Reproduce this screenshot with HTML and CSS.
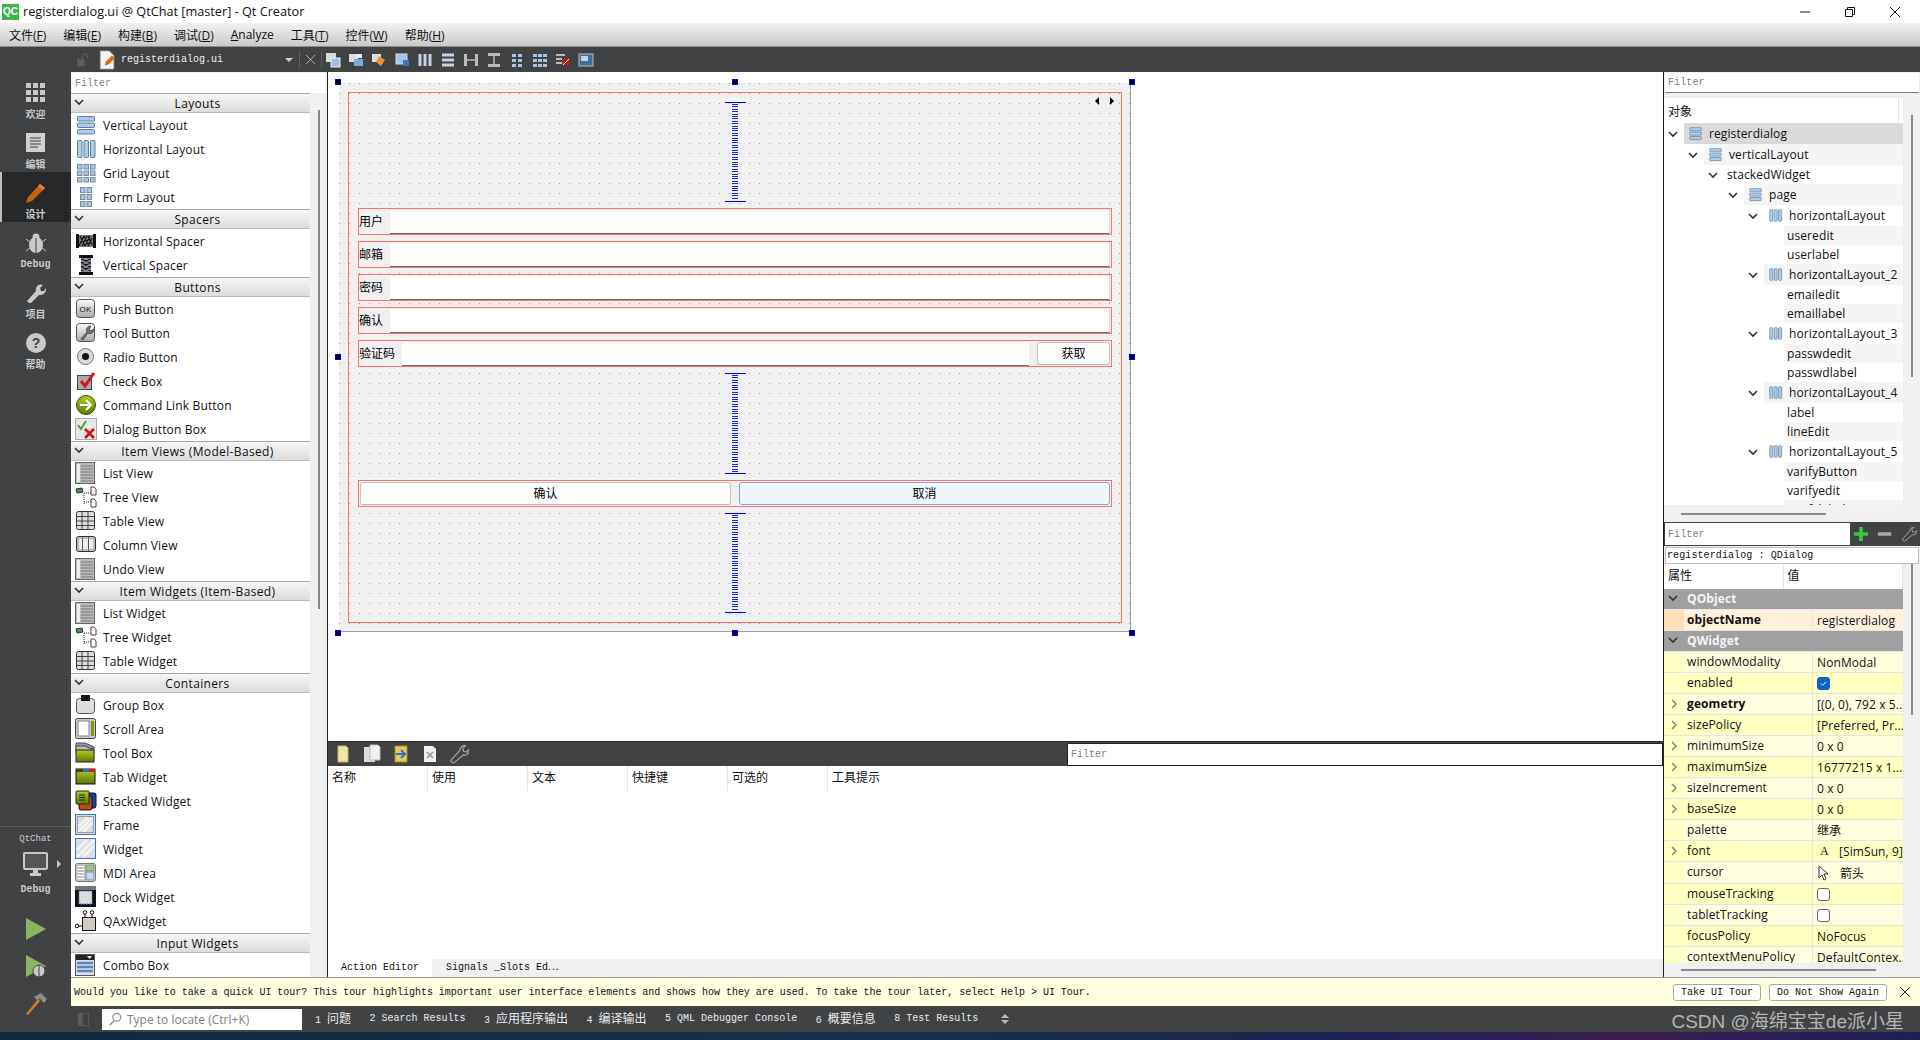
FILE: index.html
```html
<!DOCTYPE html>
<html>

<head>
	<meta charset="utf-8">
	<title>registerdialog.ui @ QtChat [master] - Qt Creator</title>
	<link rel="stylesheet" href="styles.css">
</head>

<body>
	<svg class="defs" xmlns="http://www.w3.org/2000/svg">
		<defs>
			<linearGradient id="g-btn" x1="0" y1="0" x2="0" y2="1"><stop offset="0" stop-color="#fafafa"/><stop offset="1" stop-color="#a8a8a8"/></linearGradient>
			<linearGradient id="g-green" x1="0" y1="0" x2="0" y2="1"><stop offset="0" stop-color="#b4cc22"/><stop offset="1" stop-color="#5c7a00"/></linearGradient>
			<symbol id="i-chev" viewBox="0 0 10 10"><path d="M1 3l4 4 4-4" fill="none" stroke="currentColor" stroke-width="1.6"/></symbol>
			<symbol id="i-chevr" viewBox="0 0 10 10"><path d="M3 1l4 4-4 4" fill="none" stroke="currentColor" stroke-width="1.6"/></symbol>
			<symbol id="i-vlay" viewBox="0 0 22 22"><g fill="#a8cdf0" stroke="#6a7d90"><rect x="2.5" y="2.5" width="17" height="4.5" rx="1"/><rect x="2.5" y="9" width="17" height="4.5" rx="1"/><rect x="2.5" y="15.500" width="17" height="4.500" rx="1"/></g></symbol>
			<symbol id="i-hlay" viewBox="0 0 22 22"><g fill="#a8cdf0" stroke="#6a7d90"><rect x="2.500" y="2.500" width="4.500" height="17" rx="1"/><rect x="9" y="2.500" width="4.500" height="17" rx="1"/><rect x="15.500" y="2.500" width="4.500" height="17" rx="1"/></g></symbol>
			<symbol id="i-grid" viewBox="0 0 22 22"><g fill="#a8c4e4" stroke="#7a8ba0"><rect x="2.500" y="2.500" width="4.500" height="4.500"/><rect x="9" y="2.500" width="4.500" height="4.500"/><rect x="15.500" y="2.500" width="4.500" height="4.500"/><rect x="2.500" y="9" width="4.500" height="4.500"/><rect x="9" y="9" width="4.500" height="4.500"/><rect x="15.500" y="9" width="4.500" height="4.500"/><rect x="2.500" y="15.500" width="4.500" height="4.500"/><rect x="9" y="15.500" width="4.500" height="4.500"/><rect x="15.500" y="15.500" width="4.500" height="4.500"/></g></symbol>
			<symbol id="i-form" viewBox="0 0 22 22"><g fill="#a8c4e4" stroke="#7a8ba0"><rect x="5.500" y="1.500" width="4.500" height="5"/><rect x="12" y="1.500" width="4.500" height="5"/><rect x="5.500" y="8.500" width="4.500" height="5"/><rect x="12" y="8.500" width="4.500" height="5"/><rect x="5.500" y="15.500" width="4.500" height="5"/><rect x="12" y="15.500" width="4.500" height="5"/></g></symbol>
			<symbol id="i-hsp" viewBox="0 0 22 22"><rect x="1" y="4" width="3" height="14" fill="#111"/><rect x="18" y="4" width="3" height="14" fill="#111"/><rect x="4" y="5" width="14" height="12" fill="#777"/><path d="M4 16l5-10M7 16l5-10M10 16l5-10M13 16l4-8M5 6l5 10M9 6l5 10M13 6l4 9" stroke="#111" stroke-width="1.200" fill="none"/></symbol>
			<symbol id="i-vsp" viewBox="0 0 22 22"><rect x="4" y="1" width="14" height="3" fill="#111"/><rect x="4" y="18" width="14" height="3" fill="#111"/><rect x="6" y="4" width="10" height="14" fill="#889"/><path d="M6 5l10 4M6 9l10 4M6 13l10 4M16 5L6 9M16 9L6 13M16 13L6 17" stroke="#111" stroke-width="1.200" fill="none"/></symbol>
			<symbol id="i-push" viewBox="0 0 22 22"><rect x="1.500" y="1.500" width="18" height="18" rx="3" fill="url(#g-btn)" stroke="#555"/><text x="10.500" y="13.500" font-size="8" font-family="Liberation Sans" text-anchor="middle" fill="#111">OK</text></symbol>
			<symbol id="i-tool" viewBox="0 0 22 22"><rect x="1.500" y="1.500" width="18" height="18" rx="3" fill="url(#g-btn)" stroke="#555"/><path d="M6 17l6-7a4 4 0 0 1 4-6l-2 3 2 2 3-2a4 4 0 0 1-6 4l-5 7z" fill="#777" stroke="#333" stroke-width=".7"/></symbol>
			<symbol id="i-radio" viewBox="0 0 22 22"><circle cx="10.500" cy="10.500" r="8" fill="#d8d8d8" stroke="#777"/><circle cx="10.500" cy="10.500" r="3.500" fill="#111"/></symbol>
			<symbol id="i-check" viewBox="0 0 22 22"><rect x="2.500" y="5.500" width="14" height="14" fill="#a8a8a8" stroke="#444"/><path d="M6 11l4 5 9-13" fill="none" stroke="#d4141c" stroke-width="3"/></symbol>
			<symbol id="i-link" viewBox="0 0 22 22"><circle cx="11" cy="11" r="9.500" fill="url(#g-green)" stroke="#3c4c00"/><path d="M5 11h10M11 6l5 5-5 5" fill="none" stroke="#fff" stroke-width="2"/></symbol>
			<symbol id="i-dbb" viewBox="0 0 22 22"><rect x=".5" y=".5" width="21" height="21" fill="#e6e6e6" stroke="#aaa"/><path d="M3 7l3 4 5-8" fill="none" stroke="#4aa038" stroke-width="2"/><path d="M10 11l9 9M19 11l-9 9" stroke="#cc1414" stroke-width="2.600"/></symbol>
			<symbol id="i-list" viewBox="0 0 22 22"><rect x=".5" y=".5" width="19" height="21" fill="#bbb" stroke="#666"/><rect x="2" y="2" width="3" height="18" fill="#eee"/><path d="M6 4h12M6 7h12M6 10h12M6 13h12M6 16h12M6 19h12" stroke="#777"/></symbol>
			<symbol id="i-tree" viewBox="0 0 22 22"><path d="M1 3l6-1 1 4-6 1z" fill="#4a9a38" stroke="#234"/><path d="M9 7v11M9 7h7M9 16h7" stroke="#333" stroke-dasharray="1 1" fill="none"/><path d="M16 1h3l2 2v6h-5zM16 13h3l2 2v6h-5z" fill="#fff" stroke="#444"/></symbol>
			<symbol id="i-table" viewBox="0 0 22 22"><rect x="1.500" y="1.500" width="18" height="18" rx="2" fill="#ddd" stroke="#333"/><path d="M2 6.500h17M2 11h17M2 15.500h17M7 2v17M13 2v17" stroke="#444"/></symbol>
			<symbol id="i-col" viewBox="0 0 22 22"><rect x="1.500" y="2.500" width="19" height="15" rx="2" fill="#eee" stroke="#333"/><path d="M7.500 3v14M13.500 3v14" stroke="#555"/><rect x="3" y="4" width="16" height="12" fill="none" stroke="#888"/></symbol>
			<symbol id="i-group" viewBox="0 0 22 22"><rect x="1.500" y="4.500" width="18" height="15" rx="3" fill="#ddd" stroke="#555"/><rect x="6" y="1" width="9" height="6" fill="#111"/></symbol>
			<symbol id="i-scroll" viewBox="0 0 22 22"><rect x=".5" y=".5" width="20" height="20" rx="2" fill="#ccc" stroke="#444"/><rect x="3" y="3" width="11" height="15" fill="#fff" stroke="#888"/><rect x="16" y="3" width="3" height="15" fill="#7a9a10"/></symbol>
			<symbol id="i-tbox" viewBox="0 0 22 22"><path d="M1 1h9l9 4v2H1z" fill="#999" stroke="#444"/><path d="M1 4h9l9 4v3H1z" fill="#bbb" stroke="#444"/><rect x="1" y="8" width="18" height="12" fill="url(#g-green)" stroke="#222"/></symbol>
			<symbol id="i-tab" viewBox="0 0 22 22"><rect x="1" y="3" width="19" height="15" fill="url(#g-green)" stroke="#111"/><rect x="8" y="3" width="6" height="3" fill="#2a6ed0"/><rect x="14" y="3" width="6" height="3" fill="#d42020"/><rect x="1" y="3" width="7" height="3" fill="#3a4a00"/></symbol>
			<symbol id="i-stack" viewBox="0 0 22 22"><rect x="8" y="3" width="13" height="15" rx="2" fill="#1446a8" stroke="#111"/><rect x="4" y="6" width="13" height="14" rx="2" fill="#c04a10" stroke="#111"/><rect x="1" y="1" width="13" height="13" rx="1" fill="url(#g-green)" stroke="#222"/><path d="M4 5h6M4 7.500h6M4 10h6" stroke="#222"/></symbol>
			<symbol id="i-frame" viewBox="0 0 22 22"><rect x=".5" y=".5" width="20" height="20" fill="#ddd" stroke="#3a78c4"/><path d="M3 13L13 3M3 18L18 3M8 18L18 8" stroke="#f4f4f4" stroke-width="2.500"/><rect x="2.500" y="2.500" width="16" height="16" fill="none" stroke="#999"/></symbol>
			<symbol id="i-widget" viewBox="0 0 22 22"><rect x=".5" y=".5" width="20" height="20" fill="#ddd" stroke="#3a78c4"/><path d="M2 12L12 2M2 19L19 2M8 19L19 8" stroke="#f4f4f4" stroke-width="2.500"/></symbol>
			<symbol id="i-mdi" viewBox="0 0 22 22"><rect x=".5" y="1.500" width="20" height="18" rx="2" fill="#eee" stroke="#777"/><rect x="2" y="3" width="8" height="15" fill="#fff" stroke="#999"/><path d="M3 6h6M3 9h6M3 12h6M3 15h6" stroke="#888"/><rect x="11" y="3" width="8" height="6" fill="#9cc870" stroke="#789"/><rect x="11" y="10" width="8" height="8" fill="#c4d8ee" stroke="#789"/></symbol>
			<symbol id="i-dock" viewBox="0 0 22 22"><rect x="0" y="0" width="21" height="21" fill="#111"/><rect x="0" y="0" width="21" height="4" fill="#777"/><rect x="4" y="5" width="13" height="13" fill="#ddd" stroke="#4a88d0" stroke-dasharray="2 1"/></symbol>
			<symbol id="i-qax" viewBox="0 0 22 22"><rect x="7.500" y="7.500" width="13" height="13" fill="#d0ccc0" stroke="#111"/><path d="M10 7V3M17 7V3M0 16h7" stroke="#111"/><circle cx="10" cy="2.500" r="1.800" fill="#fff" stroke="#111"/><circle cx="17" cy="2.500" r="1.800" fill="#fff" stroke="#111"/><circle cx="2" cy="16" r="1.800" fill="#fff" stroke="#111"/></symbol>
			<symbol id="i-combo" viewBox="0 0 22 22"><rect x=".5" y=".5" width="19" height="21" fill="#dde" stroke="#555"/><rect x="1" y="1" width="18" height="5" fill="#222"/><path d="M12 2h5l-2.500 3z" fill="#fff"/><path d="M2 9h16M2 13h16M2 17h16" stroke="#5a84bc" stroke-width="2.400"/></symbol>
			<symbol id="i-doc" viewBox="0 0 18 22"><path d="M1 1h10l5 5v15H1z" fill="#f4f4f4" stroke="#999"/><path d="M6 17l1-4 7-7 3 3-7 7z" fill="#d86a14"/></symbol>
			<symbol id="i-lock" viewBox="0 0 16 16"><rect x="1" y="7" width="9" height="8" fill="#5a5c5e"/><path d="M7 7V4a3 3 0 0 1 6 0v2" fill="none" stroke="#5a5c5e" stroke-width="1.500"/></symbol>
			<symbol id="i-wrench" viewBox="0 0 22 22"><path d="M3 20l-1-2 10-11a5 5 0 0 1 6-5l-3 3 1 3 3 1 3-3a5 5 0 0 1-6 6L5 21z" fill="none" stroke="#a8a8a8" stroke-width="1.300"/></symbol>
			<symbol id="t-a" viewBox="0 0 16 16"><rect x="1" y="1" width="10" height="9" fill="#d8d8d8"/><rect x="6" y="6" width="9" height="9" fill="#9cc0e8" stroke="#eee"/></symbol>
			<symbol id="t-b" viewBox="0 0 16 16"><rect x="1" y="2" width="9" height="8" fill="#ddd"/><rect x="6" y="7" width="9" height="7" fill="#7aa8dc"/><rect x="8" y="2" width="6" height="4" fill="#eee"/></symbol>
			<symbol id="t-c" viewBox="0 0 16 16"><rect x="1" y="2" width="9" height="8" fill="#ddd"/><path d="M8 4l6 4-4 6-5-4z" fill="#f09030"/></symbol>
			<symbol id="t-d" viewBox="0 0 16 16"><rect x="2" y="2" width="11" height="10" fill="#a0c4ec" stroke="#ddd"/><rect x="9" y="8" width="6" height="6" fill="#3a78c4"/></symbol>
			<symbol id="t-h" viewBox="0 0 16 16"><path d="M3 2v12M8 2v12M13 2v12" stroke="#c4d4e6" stroke-width="3"/></symbol>
			<symbol id="t-v" viewBox="0 0 16 16"><path d="M2 3h12M2 8h12M2 13h12" stroke="#c4d4e6" stroke-width="3"/></symbol>
			<symbol id="t-s" viewBox="0 0 16 16"><rect x="1" y="2" width="3" height="12" fill="#bbb"/><rect x="12" y="2" width="3" height="12" fill="#bbb"/><path d="M4 8h8" stroke="#999" stroke-width="2"/></symbol>
			<symbol id="t-w" viewBox="0 0 16 16"><rect x="2" y="1" width="12" height="3" fill="#bbb"/><rect x="2" y="12" width="12" height="3" fill="#bbb"/><path d="M8 4v8" stroke="#999" stroke-width="2"/></symbol>
			<symbol id="t-f" viewBox="0 0 16 16"><g fill="#a8c4e4"><rect x="3" y="2" width="4" height="3"/><rect x="9" y="2" width="4" height="3"/><rect x="3" y="7" width="4" height="3"/><rect x="9" y="7" width="4" height="3"/><rect x="3" y="12" width="4" height="3"/><rect x="9" y="12" width="4" height="3"/></g></symbol>
			<symbol id="t-g" viewBox="0 0 16 16"><g fill="#a8c4e4"><rect x="1" y="2" width="4" height="3"/><rect x="6" y="2" width="4" height="3"/><rect x="11" y="2" width="4" height="3"/><rect x="1" y="7" width="4" height="3"/><rect x="6" y="7" width="4" height="3"/><rect x="11" y="7" width="4" height="3"/><rect x="1" y="12" width="4" height="3"/><rect x="6" y="12" width="4" height="3"/><rect x="11" y="12" width="4" height="3"/></g></symbol>
			<symbol id="t-x" viewBox="0 0 16 16"><path d="M1 3h9M1 7h6M1 11h9" stroke="#bbb" stroke-width="2"/><circle cx="11" cy="10" r="4" fill="#b02020"/><path d="M8 13l6-6" stroke="#eee"/></symbol>
			<symbol id="t-z" viewBox="0 0 16 16"><rect x="1" y="2" width="14" height="12" fill="#3f6f9c" stroke="#bbb"/><rect x="3" y="4" width="7" height="5" fill="#c4d4e6"/></symbol>
		</defs>
	</svg>

	<div class="titlebar">
		<span class="qc-logo">QC</span>
		<span class="title-text">registerdialog.ui @ QtChat [master] - Qt Creator</span>
		<div class="win-btns">
			<svg class="win-btn" viewBox="0 0 12 12"><path d="M1 6h10" stroke="#111"/></svg>
			<svg class="win-btn" viewBox="0 0 12 12"><path d="M1.500 3.500h7v7h-7zM3.500 3V1.500h7v7H9" fill="none" stroke="#111"/></svg>
			<svg class="win-btn" viewBox="0 0 12 12"><path d="M1 1l10 10M11 1L1 11" stroke="#111"/></svg>
		</div>
	</div>

	<div class="menubar">
		<span>文件(<u>F</u>)</span>
		<span>编辑(<u>E</u>)</span>
		<span>构建(<u>B</u>)</span>
		<span>调试(<u>D</u>)</span>
		<span><u>A</u>nalyze</span>
		<span>工具(<u>T</u>)</span>
		<span>控件(<u>W</u>)</span>
		<span>帮助(<u>H</u>)</span>
	</div>

	<div class="shell">
		<div class="modebar">
			<div class="mode">
				<svg class="mode-ico" viewBox="0 0 20 20"><g fill="#c9c9c9"><rect x="0" y="0" width="5" height="5"/><rect x="7" y="0" width="5" height="5"/><rect x="14" y="0" width="5" height="5"/><rect x="0" y="7" width="5" height="5"/><rect x="7" y="7" width="5" height="5"/><rect x="14" y="7" width="5" height="5"/><rect x="0" y="14" width="5" height="5"/><rect x="7" y="14" width="5" height="5"/><rect x="14" y="14" width="5" height="5"/></g></svg>
				<span>欢迎</span>
			</div>
			<div class="mode">
				<svg class="mode-ico" viewBox="0 0 20 20"><rect width="19" height="19" fill="#d0d0d0"/><path d="M4 5h11M4 8h11M4 11h11M4 14h8" stroke="#404244"/></svg>
				<span>编辑</span>
			</div>
			<div class="mode mode-on">
				<svg class="mode-ico" viewBox="0 0 20 20"><path d="M0 20l2-6L14 1l5 4L6 18z" fill="#c8620c"/><path d="M14 1l5 4-2 2-5-4z" fill="#e08a30"/></svg>
				<span>设计</span>
			</div>
			<div class="mode">
				<svg class="mode-ico" viewBox="0 0 20 20"><ellipse cx="10" cy="12" rx="7" ry="8" fill="#c9c9c9"/><circle cx="10" cy="4" r="3.500" fill="#c9c9c9"/><path d="M10 5v15" stroke="#404244"/><path d="M0 6l4 3M20 6l-4 3M0 18l4-3M20 18l-4-3" stroke="#c9c9c9"/></svg>
				<span class="mode-latin">Debug</span>
			</div>
			<div class="mode">
				<svg class="mode-ico" viewBox="0 0 20 20"><path d="M1 18l9-10a5 5 0 0 1 7-6l-3 3 1 3 3 0 2-3a6 6 0 0 1-7 7l-9 9z" fill="#c9c9c9"/></svg>
				<span>项目</span>
			</div>
			<div class="mode">
				<svg class="mode-ico" viewBox="0 0 20 20"><circle cx="10" cy="10" r="10" fill="#c9c9c9"/><text x="10" y="15" font-size="14" font-weight="700" font-family="Liberation Sans" text-anchor="middle" fill="#404244">?</text></svg>
				<span>帮助</span>
			</div>
			<div class="mode-gap"></div>
			<div class="kit">
				<span class="kit-name">QtChat</span>
				<div class="kit-screen">
					<svg class="kit-ico" viewBox="0 0 26 26"><rect x="1" y="1" width="23" height="16" rx="1" fill="#555" stroke="#c9c9c9" stroke-width="2"/><path d="M10 18h5v3h3v3H7v-3h3z" fill="#c9c9c9"/></svg>
					<span class="kit-arrow"></span>
				</div>
				<span class="mode-latin">Debug</span>
			</div>
			<svg class="run-ico" viewBox="0 0 24 24"><path d="M2 1l20 11L2 23z" fill="#8cb65e"/></svg>
			<svg class="run-ico" viewBox="0 0 24 24"><path d="M2 1l20 11L2 23z" fill="#8cb65e"/><ellipse cx="15" cy="17" rx="6" ry="6" fill="#c9c9c9" stroke="#404244"/><path d="M15 11v12" stroke="#404244"/></svg>
			<svg class="run-ico run-last" viewBox="0 0 24 24"><path d="M2 23L14 8l2 2L4 24z" fill="#d87a20"/><path d="M10 6l7-4 6 6-3 4-4-4-3 1z" fill="#8a8a8a"/></svg>
		</div>

		<div class="workspace">
			<div class="toolbar">
				<svg class="tb-lock"><use href="#i-lock"/></svg>
				<svg class="tb-doc"><use href="#i-doc"/></svg>
				<span class="tb-file">registerdialog.ui</span>
				<span class="tb-drop"></span>
				<span class="tb-sep"></span>
				<svg class="tb-close" viewBox="0 0 10 10"><path d="M0 0l10 10M10 0L0 10" stroke="#b8b8b8"/></svg>
				<span class="tb-sep"></span>
				<div class="tb-icons">
					<svg><use href="#t-a"/></svg><svg><use href="#t-b"/></svg><svg><use href="#t-c"/></svg><svg><use href="#t-d"/></svg>
					<svg><use href="#t-h"/></svg><svg><use href="#t-v"/></svg><svg><use href="#t-s"/></svg><svg><use href="#t-w"/></svg>
					<svg><use href="#t-f"/></svg><svg><use href="#t-g"/></svg><svg><use href="#t-x"/></svg><svg><use href="#t-z"/></svg>
				</div>
			</div>

			<div class="main">
				<div class="widgetbox">
					<div class="filter wb-filter">Filter</div>
					<div class="wb-body">
						<div class="wb-list">
							<div class="wb-head"><svg class="chev"><use href="#i-chev"/></svg>Layouts</div>
							<div class="wb-item"><svg><use href="#i-vlay"/></svg>Vertical Layout</div>
							<div class="wb-item"><svg><use href="#i-hlay"/></svg>Horizontal Layout</div>
							<div class="wb-item"><svg><use href="#i-grid"/></svg>Grid Layout</div>
							<div class="wb-item"><svg><use href="#i-form"/></svg>Form Layout</div>
							<div class="wb-head"><svg class="chev"><use href="#i-chev"/></svg>Spacers</div>
							<div class="wb-item"><svg><use href="#i-hsp"/></svg>Horizontal Spacer</div>
							<div class="wb-item"><svg><use href="#i-vsp"/></svg>Vertical Spacer</div>
							<div class="wb-head"><svg class="chev"><use href="#i-chev"/></svg>Buttons</div>
							<div class="wb-item"><svg><use href="#i-push"/></svg>Push Button</div>
							<div class="wb-item"><svg><use href="#i-tool"/></svg>Tool Button</div>
							<div class="wb-item"><svg><use href="#i-radio"/></svg>Radio Button</div>
							<div class="wb-item"><svg><use href="#i-check"/></svg>Check Box</div>
							<div class="wb-item"><svg><use href="#i-link"/></svg>Command Link Button</div>
							<div class="wb-item"><svg><use href="#i-dbb"/></svg>Dialog Button Box</div>
							<div class="wb-head"><svg class="chev"><use href="#i-chev"/></svg>Item Views (Model-Based)</div>
							<div class="wb-item"><svg><use href="#i-list"/></svg>List View</div>
							<div class="wb-item"><svg><use href="#i-tree"/></svg>Tree View</div>
							<div class="wb-item"><svg><use href="#i-table"/></svg>Table View</div>
							<div class="wb-item"><svg><use href="#i-col"/></svg>Column View</div>
							<div class="wb-item"><svg><use href="#i-list"/></svg>Undo View</div>
							<div class="wb-head"><svg class="chev"><use href="#i-chev"/></svg>Item Widgets (Item-Based)</div>
							<div class="wb-item"><svg><use href="#i-list"/></svg>List Widget</div>
							<div class="wb-item"><svg><use href="#i-tree"/></svg>Tree Widget</div>
							<div class="wb-item"><svg><use href="#i-table"/></svg>Table Widget</div>
							<div class="wb-head"><svg class="chev"><use href="#i-chev"/></svg>Containers</div>
							<div class="wb-item"><svg><use href="#i-group"/></svg>Group Box</div>
							<div class="wb-item"><svg><use href="#i-scroll"/></svg>Scroll Area</div>
							<div class="wb-item"><svg><use href="#i-tbox"/></svg>Tool Box</div>
							<div class="wb-item"><svg><use href="#i-tab"/></svg>Tab Widget</div>
							<div class="wb-item"><svg><use href="#i-stack"/></svg>Stacked Widget</div>
							<div class="wb-item"><svg><use href="#i-frame"/></svg>Frame</div>
							<div class="wb-item"><svg><use href="#i-widget"/></svg>Widget</div>
							<div class="wb-item"><svg><use href="#i-mdi"/></svg>MDI Area</div>
							<div class="wb-item"><svg><use href="#i-dock"/></svg>Dock Widget</div>
							<div class="wb-item"><svg><use href="#i-qax"/></svg>QAxWidget</div>
							<div class="wb-head"><svg class="chev"><use href="#i-chev"/></svg>Input Widgets</div>
							<div class="wb-item"><svg><use href="#i-combo"/></svg>Combo Box</div>
						</div>
						<div class="vscroll"><div class="wb-thumb"></div></div>
					</div>
				</div>

				<div class="designer">
					<div class="canvas">
						<div class="form">
							<span class="handle h-tl"></span><span class="handle h-tc"></span><span class="handle h-tr"></span>
							<span class="handle h-ml"></span><span class="handle h-mr"></span>
							<span class="handle h-bl"></span><span class="handle h-bc"></span><span class="handle h-br"></span>
							<div class="layout-outer">
								<span class="page-prev"></span><span class="page-next"></span>
								<div class="spacer"></div>
								<div class="row"><div class="lbl">用户</div><div class="edit"></div></div>
								<div class="row"><div class="lbl">邮箱</div><div class="edit"></div></div>
								<div class="row"><div class="lbl">密码</div><div class="edit"></div></div>
								<div class="row"><div class="lbl">确认</div><div class="edit"></div></div>
								<div class="row"><div class="lbl lbl-wide">验证码</div><div class="edit edit-short"></div><div class="btn btn-get">获取</div></div>
								<div class="spacer spacer-mid"></div>
								<div class="row row-btns"><div class="btn">确认</div><div class="btn btn-focus">取消</div></div>
								<div class="spacer"></div>
							</div>
						</div>
					</div>

					<div class="actionbar">
						<svg viewBox="0 0 16 20"><path d="M3 2h8l2 2v14H3z" fill="#f2e4a8" stroke="#c8b060"/></svg>
						<svg viewBox="0 0 20 20"><path d="M2 3h9l2 2v13H2z" fill="#dcdcdc"/><path d="M8 1h8l2 2v13H8z" fill="#f2f2f2" stroke="#bbb"/></svg>
						<svg viewBox="0 0 18 20"><path d="M3 2h12v16H3z" fill="#e8c860" stroke="#a88820"/><path d="M4 10h8M9 6l4 4-4 4" stroke="#2a70c8" stroke-width="2" fill="none"/></svg>
						<svg viewBox="0 0 16 20"><path d="M2 2h9l3 3v13H2z" fill="#f0f0f0"/><path d="M5 8l6 6M11 8l-6 6" stroke="#999" stroke-width="1.600"/></svg>
						<svg viewBox="0 0 22 22"><use href="#i-wrench"/></svg>
						<div class="action-filter filter">Filter</div>
					</div>
					<div class="action-table">
						<div class="action-head">
							<span>名称</span><span>使用</span><span>文本</span><span>快捷键</span><span>可选的</span><span>工具提示</span>
						</div>
					</div>
					<div class="dock-tabs">
						<span class="dock-tab dock-on">Action Editor</span>
						<span class="dock-tab">Signals _Slots Ed⋯</span>
					</div>
				</div>

				<div class="rightpanel">
					<div class="filter rp-filter">Filter</div>
					<div class="tree-wrap">
						<div class="tree">
							<div class="tree-head">对象</div>
							<div class="node d0 big sel"><span class="twist"><svg><use href="#i-chev"/></svg></span><span class="cell"><svg class="node-ico"><use href="#i-vlay"/></svg>registerdialog</span></div>
							<div class="node d1 big alt"><span class="twist"><svg><use href="#i-chev"/></svg></span><span class="cell"><svg class="node-ico"><use href="#i-vlay"/></svg>verticalLayout</span></div>
							<div class="node d2 leaf"><span class="twist"><svg><use href="#i-chev"/></svg></span><span class="cell">stackedWidget</span></div>
							<div class="node d3 big alt"><span class="twist"><svg><use href="#i-chev"/></svg></span><span class="cell"><svg class="node-ico"><use href="#i-vlay"/></svg>page</span></div>
							<div class="node d4 big"><span class="twist"><svg><use href="#i-chev"/></svg></span><span class="cell"><svg class="node-ico"><use href="#i-hlay"/></svg>horizontalLayout</span></div>
							<div class="node d5 leaf alt"><span class="twist"></span><span class="cell">useredit</span></div>
							<div class="node d5 leaf"><span class="twist"></span><span class="cell">userlabel</span></div>
							<div class="node d4 big alt"><span class="twist"><svg><use href="#i-chev"/></svg></span><span class="cell"><svg class="node-ico"><use href="#i-hlay"/></svg>horizontalLayout_2</span></div>
							<div class="node d5 leaf"><span class="twist"></span><span class="cell">emailedit</span></div>
							<div class="node d5 leaf alt"><span class="twist"></span><span class="cell">emaillabel</span></div>
							<div class="node d4 big"><span class="twist"><svg><use href="#i-chev"/></svg></span><span class="cell"><svg class="node-ico"><use href="#i-hlay"/></svg>horizontalLayout_3</span></div>
							<div class="node d5 leaf alt"><span class="twist"></span><span class="cell">passwdedit</span></div>
							<div class="node d5 leaf"><span class="twist"></span><span class="cell">passwdlabel</span></div>
							<div class="node d4 big alt"><span class="twist"><svg><use href="#i-chev"/></svg></span><span class="cell"><svg class="node-ico"><use href="#i-hlay"/></svg>horizontalLayout_4</span></div>
							<div class="node d5 leaf"><span class="twist"></span><span class="cell">label</span></div>
							<div class="node d5 leaf alt"><span class="twist"></span><span class="cell">lineEdit</span></div>
							<div class="node d4 big"><span class="twist"><svg><use href="#i-chev"/></svg></span><span class="cell"><svg class="node-ico"><use href="#i-hlay"/></svg>horizontalLayout_5</span></div>
							<div class="node d5 leaf alt"><span class="twist"></span><span class="cell">varifyButton</span></div>
							<div class="node d5 leaf"><span class="twist"></span><span class="cell">varifyedit</span></div>
							<div class="node d5 leaf alt"><span class="twist"></span><span class="cell">varifylabel</span></div>
						</div>
						<div class="vscroll"><div class="tree-thumb"></div></div>
					</div>
					<div class="hscroll"><div class="tree-hthumb"></div></div>

					<div class="prop-bar">
						<div class="filter prop-filter">Filter</div>
						<svg viewBox="0 0 18 18"><path d="M7 1h4v6h6v4h-6v6H7v-6H1V7h6z" fill="#3cc83c"/></svg>
						<svg viewBox="0 0 18 18"><rect x="1" y="7" width="15" height="4" fill="#a8a8a8"/></svg>
						<svg viewBox="0 0 22 22"><use href="#i-wrench"/></svg>
					</div>
					<div class="obj-class">registerdialog : QDialog</div>
					<div class="prop-wrap">
						<div class="props">
							<div class="prop-head"><span>属性</span><span>值</span></div>
							<div class="prop-group"><svg class="chev"><use href="#i-chev"/></svg>QObject</div>
							<div class="prop obj"><span class="gut"></span><span class="pname bold">objectName</span><span class="pval">registerdialog</span></div>
							<div class="prop-group"><svg class="chev"><use href="#i-chev"/></svg>QWidget</div>
							<div class="prop lite"><span class="gut"></span><span class="pname">windowModality</span><span class="pval">NonModal</span></div>
							<div class="prop"><span class="gut"></span><span class="pname">enabled</span><span class="pval"><span class="cb cb-on"><svg viewBox="0 0 12 12"><path d="M3 6l2 2 4-4" fill="none" stroke="#fff"/></svg></span></span></div>
							<div class="prop lite"><span class="gut"><svg><use href="#i-chevr"/></svg></span><span class="pname bold">geometry</span><span class="pval">[(0, 0), 792 x 5..</span></div>
							<div class="prop"><span class="gut"><svg><use href="#i-chevr"/></svg></span><span class="pname">sizePolicy</span><span class="pval">[Preferred, Pr...</span></div>
							<div class="prop lite"><span class="gut"><svg><use href="#i-chevr"/></svg></span><span class="pname">minimumSize</span><span class="pval">0 x 0</span></div>
							<div class="prop"><span class="gut"><svg><use href="#i-chevr"/></svg></span><span class="pname">maximumSize</span><span class="pval">16777215 x 1...</span></div>
							<div class="prop lite"><span class="gut"><svg><use href="#i-chevr"/></svg></span><span class="pname">sizeIncrement</span><span class="pval">0 x 0</span></div>
							<div class="prop"><span class="gut"><svg><use href="#i-chevr"/></svg></span><span class="pname">baseSize</span><span class="pval">0 x 0</span></div>
							<div class="prop lite"><span class="gut"></span><span class="pname">palette</span><span class="pval">继承</span></div>
							<div class="prop"><span class="gut"><svg><use href="#i-chevr"/></svg></span><span class="pname">font</span><span class="pval"><span class="font-a">A</span>[SimSun, 9]</span></div>
							<div class="prop lite prop-tall"><span class="gut"></span><span class="pname">cursor</span><span class="pval"><svg class="cursor-ico" viewBox="0 0 12 16"><path d="M1 1v12l3-3 2 5 2-1-2-5h4z" fill="#fff" stroke="#333"/></svg>箭头</span></div>
							<div class="prop"><span class="gut"></span><span class="pname">mouseTracking</span><span class="pval"><span class="cb"></span></span></div>
							<div class="prop lite"><span class="gut"></span><span class="pname">tabletTracking</span><span class="pval"><span class="cb"></span></span></div>
							<div class="prop"><span class="gut"></span><span class="pname">focusPolicy</span><span class="pval">NoFocus</span></div>
							<div class="prop lite"><span class="gut"></span><span class="pname">contextMenuPolicy</span><span class="pval">DefaultContex..</span></div>
						</div>
						<div class="vscroll"><div class="prop-thumb"></div></div>
					</div>
					<div class="hscroll hscroll-low"><div class="prop-hthumb"></div></div>
				</div>
			</div>

			<div class="tour">
				<span class="tour-text">Would you like to take a quick UI tour? This tour highlights important user interface elements and shows how they are used. To take the tour later, select Help &gt; UI Tour.</span>
				<span class="tour-btn">Take UI Tour</span>
				<span class="tour-btn">Do Not Show Again</span>
				<svg class="tour-x" viewBox="0 0 10 10"><path d="M0 0l10 10M10 0L0 10" stroke="#222"/></svg>
			</div>

			<div class="status">
				<svg class="st-toggle" viewBox="0 0 12 14"><rect x="0" y="0" width="12" height="14" fill="#5a5c5e"/><rect x="5" y="1" width="6" height="12" fill="#404244"/></svg>
				<div class="locator">
					<svg viewBox="0 0 16 16"><circle cx="10" cy="6" r="4.500" fill="none" stroke="#888" stroke-width="1.300"/><path d="M7 10l-5 5" stroke="#888" stroke-width="1.600"/></svg>
					Type to locate (Ctrl+K)
				</div>
				<div class="st-tabs">
					<span>1 <span class="cn">问题</span></span>
					<span>2 Search Results</span>
					<span>3 <span class="cn">应用程序输出</span></span>
					<span>4 <span class="cn">编译输出</span></span>
					<span>5 QML Debugger Console</span>
					<span>6 <span class="cn">概要信息</span></span>
					<span>8 Test Results</span>
				</div>
				<span class="st-updown"></span>
				<span class="watermark">CSDN @海绵宝宝de派小星</span>
			</div>
		</div>
	</div>

	<div class="desktop"></div>
</body>

</html>
```

FILE: styles.css
```css
* {
	box-sizing: border-box;
}

body {
	margin: 0;
	height: 100vh;
	display: flex;
	flex-direction: column;
	overflow: hidden;
	background-color: #fff;
	color: #111;
	font-family: "Open Sans", "Noto Sans CJK SC", sans-serif;
	font-size: 12px;
}

.defs {
	position: absolute;
	width: 0;
	height: 0;
}

.titlebar {
	height: 23px;
	display: flex;
	align-items: center;
	background-color: #fff;
}

.qc-logo {
	width: 17px;
	height: 16px;
	margin-left: 2px;
	background-color: #3cb54a;
	color: #fff;
	font: 700 10px/16px "Liberation Sans", sans-serif;
	text-align: center;
}

.title-text {
	margin-left: 4px;
	padding-bottom: 2px;
	font-size: 12.700px;
	white-space: nowrap;
}

.win-btns {
	margin-left: auto;
	display: flex;
	gap: 33px;
	padding-right: 19px;
}

.win-btn {
	width: 12px;
	height: 12px;
}

.menubar {
	height: 24px;
	display: flex;
	align-items: center;
	gap: 17px;
	padding-left: 9px;
	background: linear-gradient(#f2f2f2, #c9c9c9);
	border-bottom: 1px solid #8c8c8c;
	white-space: nowrap;
}

.shell {
	flex: 1;
	display: flex;
	min-height: 0;
}

.desktop {
	height: 8px;
	flex: none;
	background: linear-gradient(90deg, #10283f, #15304a 45%, #1c2350 70%, #3a1c52 85%, #1c2050);
}

/* left mode bar */
.modebar {
	width: 71px;
	flex: none;
	display: flex;
	flex-direction: column;
	padding-top: 25px;
	background-color: #404244;
	color: #c9c9c9;
}

.mode {
	height: 50px;
	display: flex;
	flex-direction: column;
	align-items: center;
	padding-top: 11px;
	font-size: 10px;
	font-weight: 700;
	line-height: 13px;
}

.mode-on {
	background-color: #262829;
	border-left: 2px solid #bdbdbd;
	padding-right: 2px;
}

.mode-ico {
	width: 20px;
	height: 20px;
	margin-bottom: 5px;
	flex: none;
}

.mode-latin {
	font-family: "Liberation Mono", monospace;
	font-size: 10px;
	font-weight: 700;
}

.mode-gap {
	flex: 1;
}

.kit {
	height: 78px;
	flex: none;
	display: flex;
	flex-direction: column;
	align-items: center;
	padding-top: 6px;
	border-top: 1px solid #5c5e60;
	margin-bottom: 13px;
	font-size: 10px;
}

.kit-name {
	font: 9px/12px "Liberation Mono", monospace;
}

.kit-screen {
	position: relative;
	height: 39px;
	padding-top: 7px;
}

.kit-ico {
	width: 26px;
	height: 26px;
}

.kit-arrow {
	position: absolute;
	left: 34px;
	top: 15px;
	border-left: 4px solid #c9c9c9;
	border-top: 4px solid transparent;
	border-bottom: 4px solid transparent;
}

.run-ico {
	width: 24px;
	height: 24px;
	margin: 0 auto 13px;
	flex: none;
}

.run-last {
	margin-bottom: 17px;
}

.workspace {
	flex: 1;
	min-width: 0;
	display: flex;
	flex-direction: column;
}

/* top toolbar */
.toolbar {
	height: 25px;
	flex: none;
	display: flex;
	align-items: center;
	padding-left: 5px;
	background-color: #404244;
	color: #eee;
}

.tb-lock {
	width: 14px;
	height: 14px;
}

.tb-doc {
	width: 17px;
	height: 20px;
	margin-left: 9px;
}

.tb-file {
	margin-left: 5px;
	width: 164px;
	font: 10px "Liberation Mono", monospace;
}

.tb-drop {
	border-top: 4px solid #d0d0d0;
	border-left: 4px solid transparent;
	border-right: 4px solid transparent;
}

.tb-sep {
	width: 1px;
	height: 17px;
	margin-left: 6px;
	background-color: #5c5e60;
}

.tb-close {
	width: 9px;
	height: 9px;
	margin-left: 6px;
}

.tb-icons {
	display: flex;
	gap: 7px;
	margin-left: 3px;
}

.tb-icons svg {
	width: 16px;
	height: 16px;
}

.main {
	flex: 1;
	min-height: 0;
	display: flex;
}

.filter {
	display: flex;
	align-items: center;
	padding-left: 3px;
	background-color: #fff;
	color: #808080;
	font: 10px "Liberation Mono", monospace;
}

/* widget box */
.widgetbox {
	width: 256px;
	flex: none;
	display: flex;
	flex-direction: column;
	background-color: #f0f0f0;
}

.wb-filter {
	height: 20px;
	margin: 1px 1px 0;
	flex: none;
}

.wb-body {
	flex: 1;
	min-height: 0;
	display: flex;
}

.wb-list {
	width: 239px;
	background-color: #fff;
	overflow: hidden;
}

.wb-head {
	position: relative;
	height: 20px;
	padding-left: 14px;
	border-top: 1px solid #a6a6a6;
	border-bottom: 1px solid #bdbdbd;
	background: linear-gradient(#f6f6f6, #dcdcdc);
	text-align: center;
	letter-spacing: .35px;
	line-height: 19px;
}

.chev {
	width: 10px;
	height: 10px;
	color: #333;
}

.wb-head .chev {
	position: absolute;
	left: 3px;
	top: 3px;
}

.wb-item {
	height: 24px;
	display: flex;
	align-items: center;
	padding-left: 4px;
	letter-spacing: .15px;
}

.wb-item svg {
	width: 22px;
	height: 22px;
	margin-right: 6px;
	flex: none;
}

.vscroll {
	flex: 1;
	background-color: #f0f0f0;
	position: relative;
}

.vscroll div {
	position: absolute;
	left: 8px;
	width: 2px;
	background-color: #8a8a8a;
}

.wb-thumb {
	top: 17px;
	height: 499px;
}

/* designer area */
.designer {
	flex: 1;
	min-width: 0;
	display: flex;
	flex-direction: column;
	border-left: 1px solid #222;
	border-right: 1px solid #222;
	background-color: #fff;
}

.canvas {
	flex: 1;
	min-height: 0;
	padding: 11px 0 0 11px;
}

.form {
	position: relative;
	width: 792px;
	height: 549px;
	padding: 9px 8px 8px 9px;
	display: flex;
	background-color: #f0f0f0;
	background-image: radial-gradient(circle at .5px .5px, #9a9a9a .6px, transparent .7px);
	background-size: 10px 10px;
	border-right: 1px solid #a0a0a0;
	border-bottom: 1px solid #a0a0a0;
}

.handle {
	position: absolute;
	width: 6px;
	height: 6px;
	background-color: #000;
	border: 1px solid #00f;
	z-index: 2;
}

.h-tl, .h-tc, .h-tr { top: -4px; }
.h-bl, .h-bc, .h-br { bottom: -5px; }
.h-ml, .h-mr { top: 271px; }
.h-tl, .h-ml, .h-bl { left: -4px; }
.h-tc, .h-bc { left: 393px; }
.h-tr, .h-mr, .h-br { right: -5px; }

.layout-outer {
	position: relative;
	flex: 1;
	display: flex;
	flex-direction: column;
	gap: 6px;
	padding: 9px;
	border: 1px solid #ff7070;
}

.page-prev, .page-next {
	position: absolute;
	top: 4px;
	border-top: 4px solid transparent;
	border-bottom: 4px solid transparent;
}

.page-prev {
	left: 746px;
	border-right: 4px solid #000;
}

.page-next {
	left: 761px;
	border-left: 4px solid #000;
}

.spacer {
	position: relative;
	align-self: center;
	width: 21px;
	height: 100px;
	flex: none;
	border-top: 1px solid #00f;
	border-bottom: 1px solid #00f;
}

.spacer::after {
	content: "";
	position: absolute;
	left: 7px;
	top: 1px;
	bottom: 1px;
	width: 6px;
	background: repeating-linear-gradient(#2020ff 0 1px, #f0f0ff 1px 2.400px);
}

.spacer-mid {
	height: 101px;
}

.row {
	height: 27px;
	flex: none;
	display: flex;
	border: 1px solid #ff7070;
	background-color: #f0f0f0;
}

.lbl {
	width: 31px;
	flex: none;
	line-height: 25px;
	color: #000;
}

.lbl-wide {
	width: 43px;
}

.edit {
	flex: 1;
	margin-right: 1px;
	background-color: #fff;
	border-top: 1px solid #ebebeb;
	border-right: 1px solid #d8d8d8;
	border-bottom: 1px solid #6a6a6a;
}

.edit-short {
	margin-right: 8px;
	border-right: 0;
}

.btn {
	flex: 1;
	margin: 1px;
	background-color: #fdfdfd;
	border: 1px solid #c6c6c6;
	border-bottom-color: #b4b4b4;
	border-radius: 3px;
	color: #000;
	text-align: center;
	line-height: 21px;
}

.btn-get {
	flex: none;
	width: 73px;
	margin-left: 0;
}

.row-btns {
	gap: 6px;
}

.btn-focus {
	background-color: #f0f6fb;
	border-color: #7fabd0;
}

/* action editor */
.actionbar {
	height: 25px;
	flex: none;
	display: flex;
	align-items: center;
	gap: 9px;
	padding-left: 5px;
	background-color: #404244;
	border-top: 1px solid #2a2a2a;
}

.actionbar svg {
	width: 20px;
	height: 20px;
}

.action-filter {
	height: 23px;
	margin-left: auto;
	width: 596px;
	border: 1px solid #222;
}

.action-table {
	height: 193px;
	flex: none;
}

.action-head {
	height: 25px;
	display: grid;
	grid-template-columns: repeat(6, 100px);
}

.action-head span {
	padding-left: 4px;
	border-right: 1px solid #e5e5e5;
	line-height: 23px;
}

.action-head span:last-child {
	border-right: 0;
}

.dock-tabs {
	height: 18px;
	flex: none;
	display: flex;
	background-color: #f0f0f0;
	font: 10px/18px "Liberation Mono", "Noto Sans CJK SC", monospace;
}

.dock-tab {
	padding: 0 14px;
	width: 104px;
	white-space: nowrap;
}

.dock-on {
	background-color: #fff;
	padding-left: 13px;
}

.dock-tab + .dock-tab {
	width: 145px;
}

/* object inspector and property editor */
.rightpanel {
	width: 256px;
	flex: none;
	display: flex;
	flex-direction: column;
	background-color: #f0f0f0;
	letter-spacing: .1px;
}

.rp-filter {
	height: 20px;
	margin: 1px 1px 0;
	flex: none;
	border-bottom: 1px solid #808080;
}

.tree-wrap {
	height: 407px;
	flex: none;
	margin-top: 5px;
	display: flex;
}

.tree {
	width: 239px;
	background-color: #fff;
	overflow: hidden;
}

.tree-head {
	height: 25px;
	padding-left: 4px;
	line-height: 27px;
	margin-right: 4px;
	border-right: 1px solid #e5e5e5;
}

.node {
	display: flex;
	white-space: nowrap;
}

.big {
	height: 21px;
	line-height: 21px;
}

.leaf {
	height: 19px;
	line-height: 19px;
}

.twist {
	display: flex;
	justify-content: flex-end;
	align-items: center;
	flex: none;
}

.twist svg {
	width: 10px;
	height: 10px;
	margin-right: 6px;
	color: #333;
}

.d0 .twist { width: 20px; }
.d1 .twist { width: 40px; }
.d2 .twist { width: 60px; }
.d3 .twist { width: 80px; }
.d4 .twist { width: 100px; }
.d5 .twist { width: 120px; }

.cell {
	flex: 1;
	display: flex;
	align-items: center;
	padding-left: 3px;
}

.big .cell {
	padding-left: 4px;
}

.node-ico {
	width: 15px;
	height: 15px;
	margin-right: 6px;
}

.alt .cell {
	background-color: #f5f5f5;
}

.sel .cell {
	background-color: #d9d9d9;
}

.tree-thumb {
	top: 17px;
	height: 262px;
}

.hscroll {
	position: relative;
	height: 17px;
	flex: none;
}

.hscroll div {
	position: absolute;
	top: 8px;
	height: 2px;
	background-color: #8a8a8a;
}

.tree-hthumb {
	left: 17px;
	width: 145px;
}

.prop-bar {
	height: 24px;
	flex: none;
	display: flex;
	align-items: center;
	gap: 8px;
	padding-left: 1px;
	background-color: #404244;
}

.prop-bar svg {
	width: 16px;
	height: 16px;
}

.prop-filter {
	width: 185px;
	height: 22px;
	margin-right: -5px;
}

.obj-class {
	height: 17px;
	flex: none;
	margin: 1px 1px 0;
	padding-left: 1px;
	background-color: #fff;
	border: 1px solid #c0c0c0;
	color: #111;
	font: 10px/15px "Liberation Mono", monospace;
}

.prop-wrap {
	flex: 1;
	min-height: 0;
	display: flex;
}

.props {
	width: 239px;
	overflow: hidden;
}

.prop-head {
	height: 25px;
	display: flex;
	background-color: #fff;
	line-height: 24px;
}

.prop-head span {
	width: 150px;
	padding-left: 4px;
	border-right: 1px solid #e5e5e5;
}

.prop-group {
	position: relative;
	height: 21px;
	padding-left: 23px;
	background-color: #a0a0a0;
	border-bottom: 1px solid #e8e8e8;
	color: #f4f4f4;
	font-weight: 700;
	line-height: 20px;
}

.prop-group .chev {
	position: absolute;
	left: 4px;
	top: 4px;
}

.prop {
	height: 21px;
	display: flex;
	align-items: center;
	background-color: #ffffbf;
	border-bottom: 1px solid #e4e4e4;
	white-space: nowrap;
}

.prop-tall {
	height: 22px;
}

.lite {
	background-color: #ffffdf;
}

.lite .gut {
	background-color: #ffffc8;
}

.obj {
	background-color: #fff0dd;
}

.obj .gut {
	background-color: #ffdfb8;
}

.gut {
	width: 20px;
	height: 100%;
	flex: none;
	display: flex;
	align-items: center;
	justify-content: center;
	color: #888;
}

.gut svg {
	width: 10px;
	height: 10px;
}

.pname {
	width: 129px;
	height: 100%;
	flex: none;
	padding-left: 3px;
	border-right: 1px solid #e4e4e4;
	line-height: 20px;
}

.bold {
	font-weight: 700;
}

.pval {
	flex: 1;
	min-width: 0;
	display: flex;
	align-items: center;
	padding-left: 4px;
	overflow: hidden;
}

.cb {
	width: 13px;
	height: 13px;
	display: block;
	background-color: #fff;
	border: 1px solid #666;
	border-radius: 3px;
}

.cb-on {
	background-color: #0b63c4;
	border-color: #0b63c4;
}

.cb svg {
	display: block;
}

.font-a {
	width: 22px;
	padding-left: 3px;
	font-family: "Liberation Serif", serif;
}

.cursor-ico {
	width: 12px;
	height: 16px;
	margin: 0 10px 0 1px;
}

.prop-thumb {
	top: 0;
	height: 151px;
}

.hscroll-low {
	height: 14px;
}

.hscroll-low div {
	top: 6px;
}

.prop-hthumb {
	left: 17px;
	width: 195px;
}

/* notification and status bar */
.tour {
	height: 29px;
	flex: none;
	display: flex;
	align-items: center;
	padding-left: 3px;
	background-color: #ffffe1;
	border-top: 1px solid #9a9a9a;
	font: 10px "Liberation Mono", monospace;
	white-space: nowrap;
}

.tour-text {
	flex: 1;
	letter-spacing: -.02px;
}

.tour-btn {
	height: 17px;
	padding: 0 7px;
	background-color: #fff;
	border: 1px solid #aaa;
	border-radius: 3px;
	line-height: 15px;
	margin-right: 8px;
}

.tour-x {
	width: 10px;
	height: 10px;
	margin: 0 10px 0 5px;
}

.status {
	height: 26px;
	flex: none;
	display: flex;
	align-items: center;
	background-color: #404244;
	color: #eaeaea;
}

.st-toggle {
	width: 11px;
	height: 13px;
	margin-left: 7px;
}

.locator {
	width: 200px;
	height: 21px;
	margin-left: 13px;
	display: flex;
	align-items: center;
	gap: 5px;
	padding-left: 6px;
	background-color: #fff;
	color: #808080;
}

.locator svg {
	width: 14px;
	height: 14px;
}

.st-tabs {
	margin-left: 13px;
	display: flex;
	align-items: center;
	gap: 18.500px;
	font: 10px/16px "Liberation Mono", monospace;
	white-space: nowrap;
}

.cn {
	font: 12px/16px "Noto Sans CJK SC", sans-serif;
}

.st-updown {
	margin-left: 23px;
	display: flex;
	flex-direction: column;
	gap: 2px;
}

.st-updown::before, .st-updown::after {
	content: "";
	border-left: 4px solid transparent;
	border-right: 4px solid transparent;
}

.st-updown::before {
	border-bottom: 4px solid #bbb;
}

.st-updown::after {
	border-top: 4px solid #bbb;
}

.watermark {
	margin-left: auto;
	margin-right: 16px;
	color: #b4b4b4;
	font: 19px "Liberation Sans", "Noto Sans CJK SC", sans-serif;
	white-space: nowrap;
}
```
